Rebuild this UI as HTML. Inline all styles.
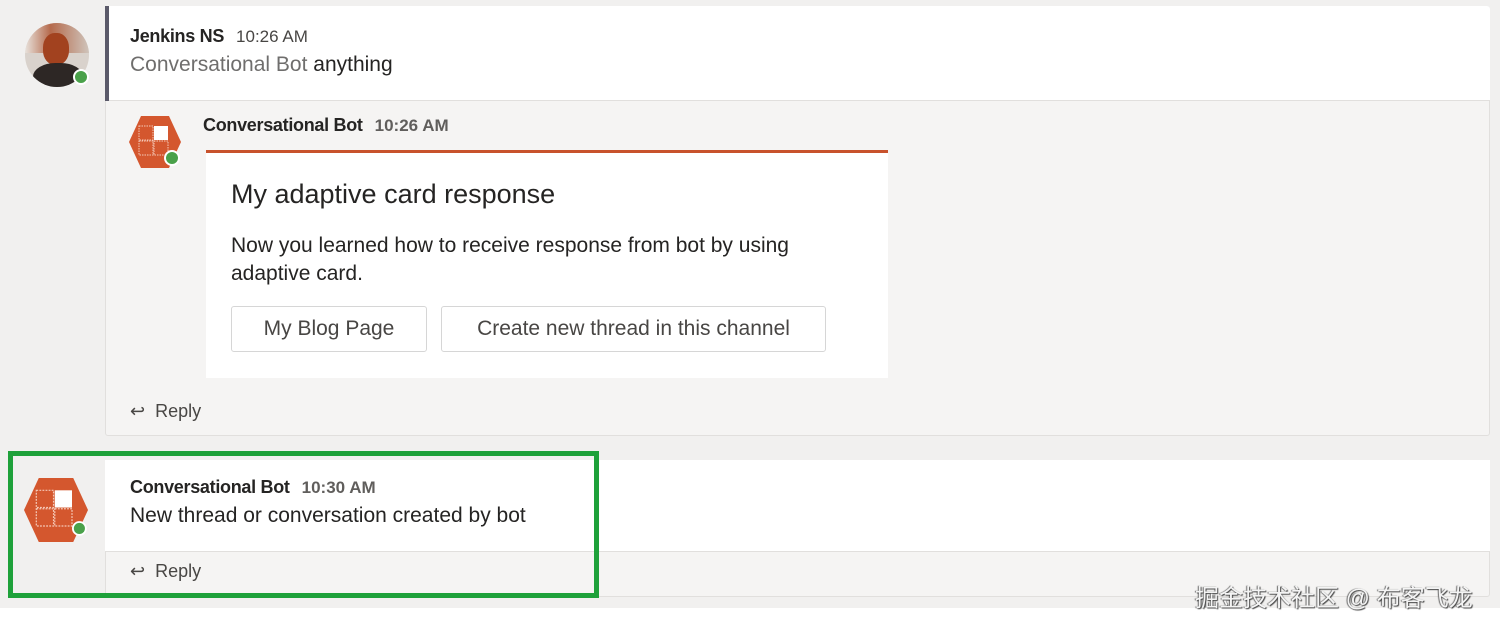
<!DOCTYPE html>
<html><head><meta charset="utf-8"><style>
*{margin:0;padding:0;box-sizing:border-box}
body{width:1500px;height:626px;background:#f1f0ef;position:relative;overflow:hidden;font-family:"Segoe UI","Liberation Sans","Noto Sans CJK SC",sans-serif;color:#252423}
.abs{position:absolute}
.card{position:absolute;left:105px;width:1385px;background:#f5f4f3;border:1px solid #e1dfdd;border-radius:3px}
.white{background:#fff}
.name{font-weight:bold;font-size:18px;letter-spacing:-0.3px}
.time{font-size:17px;color:#484644;margin-left:12px}
.reply{font-size:18px;color:#484644}
.btn{position:absolute;top:306px;height:46px;border:1px solid #d6d6d6;border-radius:3px;background:#fff;font-size:21px;color:#484644;text-align:center;line-height:44px}
</style></head><body>
<div class="abs" style="left:0;top:608px;width:1500px;height:18px;background:#fff"></div>

<!-- card 1 -->
<div class="card" style="top:6px;height:430px"></div>
<div class="abs white" style="left:105px;top:6px;width:1385px;height:95px;border-bottom:1px solid #e1dfdd;border-radius:3px 3px 0 0"></div>
<div class="abs" style="left:105px;top:6px;width:4px;height:95px;background:#5b5a6a"></div>
<div class="abs" style="left:25px;top:23px;width:64px;height:64px;border-radius:50%;overflow:hidden;background:#d9d2cc">
 <div class="abs" style="left:0;top:0;width:64px;height:30px;background:linear-gradient(90deg,#e8e2dc,#b56a4c 40%,#cfc4bb)"></div>
 <div class="abs" style="left:18px;top:10px;width:26px;height:32px;border-radius:45%;background:#a2421f"></div>
 <div class="abs" style="left:8px;top:40px;width:50px;height:30px;border-radius:45% 45% 0 0;background:#2d2725"></div>
</div>
<div class="abs" style="left:73px;top:69px;width:16px;height:16px;border-radius:50%;background:#4aa14a;border:2px solid #fff"></div>
<div class="abs" style="left:130px;top:26px"><span class="name">Jenkins NS</span><span class="time">10:26 AM</span></div>
<div class="abs" style="left:130px;top:53px;font-size:21px"><span style="color:#6f6e6d">Conversational Bot</span> anything</div>

<svg class="abs" style="left:128px;top:116px" width="54" height="52" viewBox="0 0 54 52"><polygon points="13,0 41,0 53,26 41,52 13,52 1,26" fill="#d4572e"/><rect x="11" y="10" width="14" height="14" fill="none" stroke="#f5c9b8" stroke-width="1" stroke-dasharray="1.5 1"/><rect x="26" y="10" width="14" height="14" fill="#fff"/><rect x="11" y="25" width="14" height="14" fill="none" stroke="#f5c9b8" stroke-dasharray="1.5 1"/><rect x="26" y="25" width="14" height="14" fill="none" stroke="#f5c9b8" stroke-dasharray="1.5 1"/><circle cx="44" cy="42" r="8" fill="#fff"/><circle cx="44" cy="42" r="6" fill="#4aa14a"/></svg>
<div class="abs" style="left:203px;top:115px"><span class="name">Conversational Bot</span><span class="time" style="font-weight:bold;color:#605e5c">10:26 AM</span></div>
<div class="abs white" style="left:206px;top:150px;width:682px;height:228px;border-top:3px solid #c8522c"></div>
<div class="abs" style="left:231px;top:179px;font-size:27px">My adaptive card response</div>
<div class="abs" style="left:231px;top:232px;font-size:21px;line-height:28px;width:620px">Now you learned how to receive response from bot by using adaptive card.</div>
<div class="btn" style="left:231px;width:196px">My Blog Page</div>
<div class="btn" style="left:441px;width:385px">Create new thread in this channel</div>
<div class="abs reply" style="left:130px;top:401px">↩&nbsp; Reply</div>

<!-- card 2 -->
<div class="card" style="top:460px;height:137px"></div>
<div class="abs white" style="left:105px;top:460px;width:1385px;height:92px;border-bottom:1px solid #e1dfdd"></div>
<svg class="abs" style="left:22px;top:478px" width="68" height="64" viewBox="0 0 54 52"><polygon points="13,0 41,0 53,26 41,52 13,52 1,26" fill="#d4572e"/><rect x="11" y="10" width="14" height="14" fill="none" stroke="#f5c9b8" stroke-dasharray="1.5 1"/><rect x="26" y="10" width="14" height="14" fill="#fff"/><rect x="11" y="25" width="14" height="14" fill="none" stroke="#f5c9b8" stroke-dasharray="1.5 1"/><rect x="26" y="25" width="14" height="14" fill="none" stroke="#f5c9b8" stroke-dasharray="1.5 1"/><circle cx="46" cy="41" r="6" fill="#fff"/><circle cx="46" cy="41" r="4.5" fill="#4aa14a"/></svg>
<div class="abs" style="left:130px;top:477px"><span class="name">Conversational Bot</span><span class="time" style="font-weight:bold;color:#605e5c">10:30 AM</span></div>
<div class="abs" style="left:130px;top:504px;font-size:21px">New thread or conversation created by bot</div>
<div class="abs reply" style="left:130px;top:561px">↩&nbsp; Reply</div>

<div class="abs" style="left:8px;top:451px;width:591px;height:147px;border:5px solid #1ea13a"></div>
<div class="abs" style="left:1195px;top:578px;font-size:24px;color:#f4f4f4;text-shadow:1px 1px 1px #444,-1px 0 1px #666">掘金技术社区 @ 布客飞龙</div>
</body></html>
